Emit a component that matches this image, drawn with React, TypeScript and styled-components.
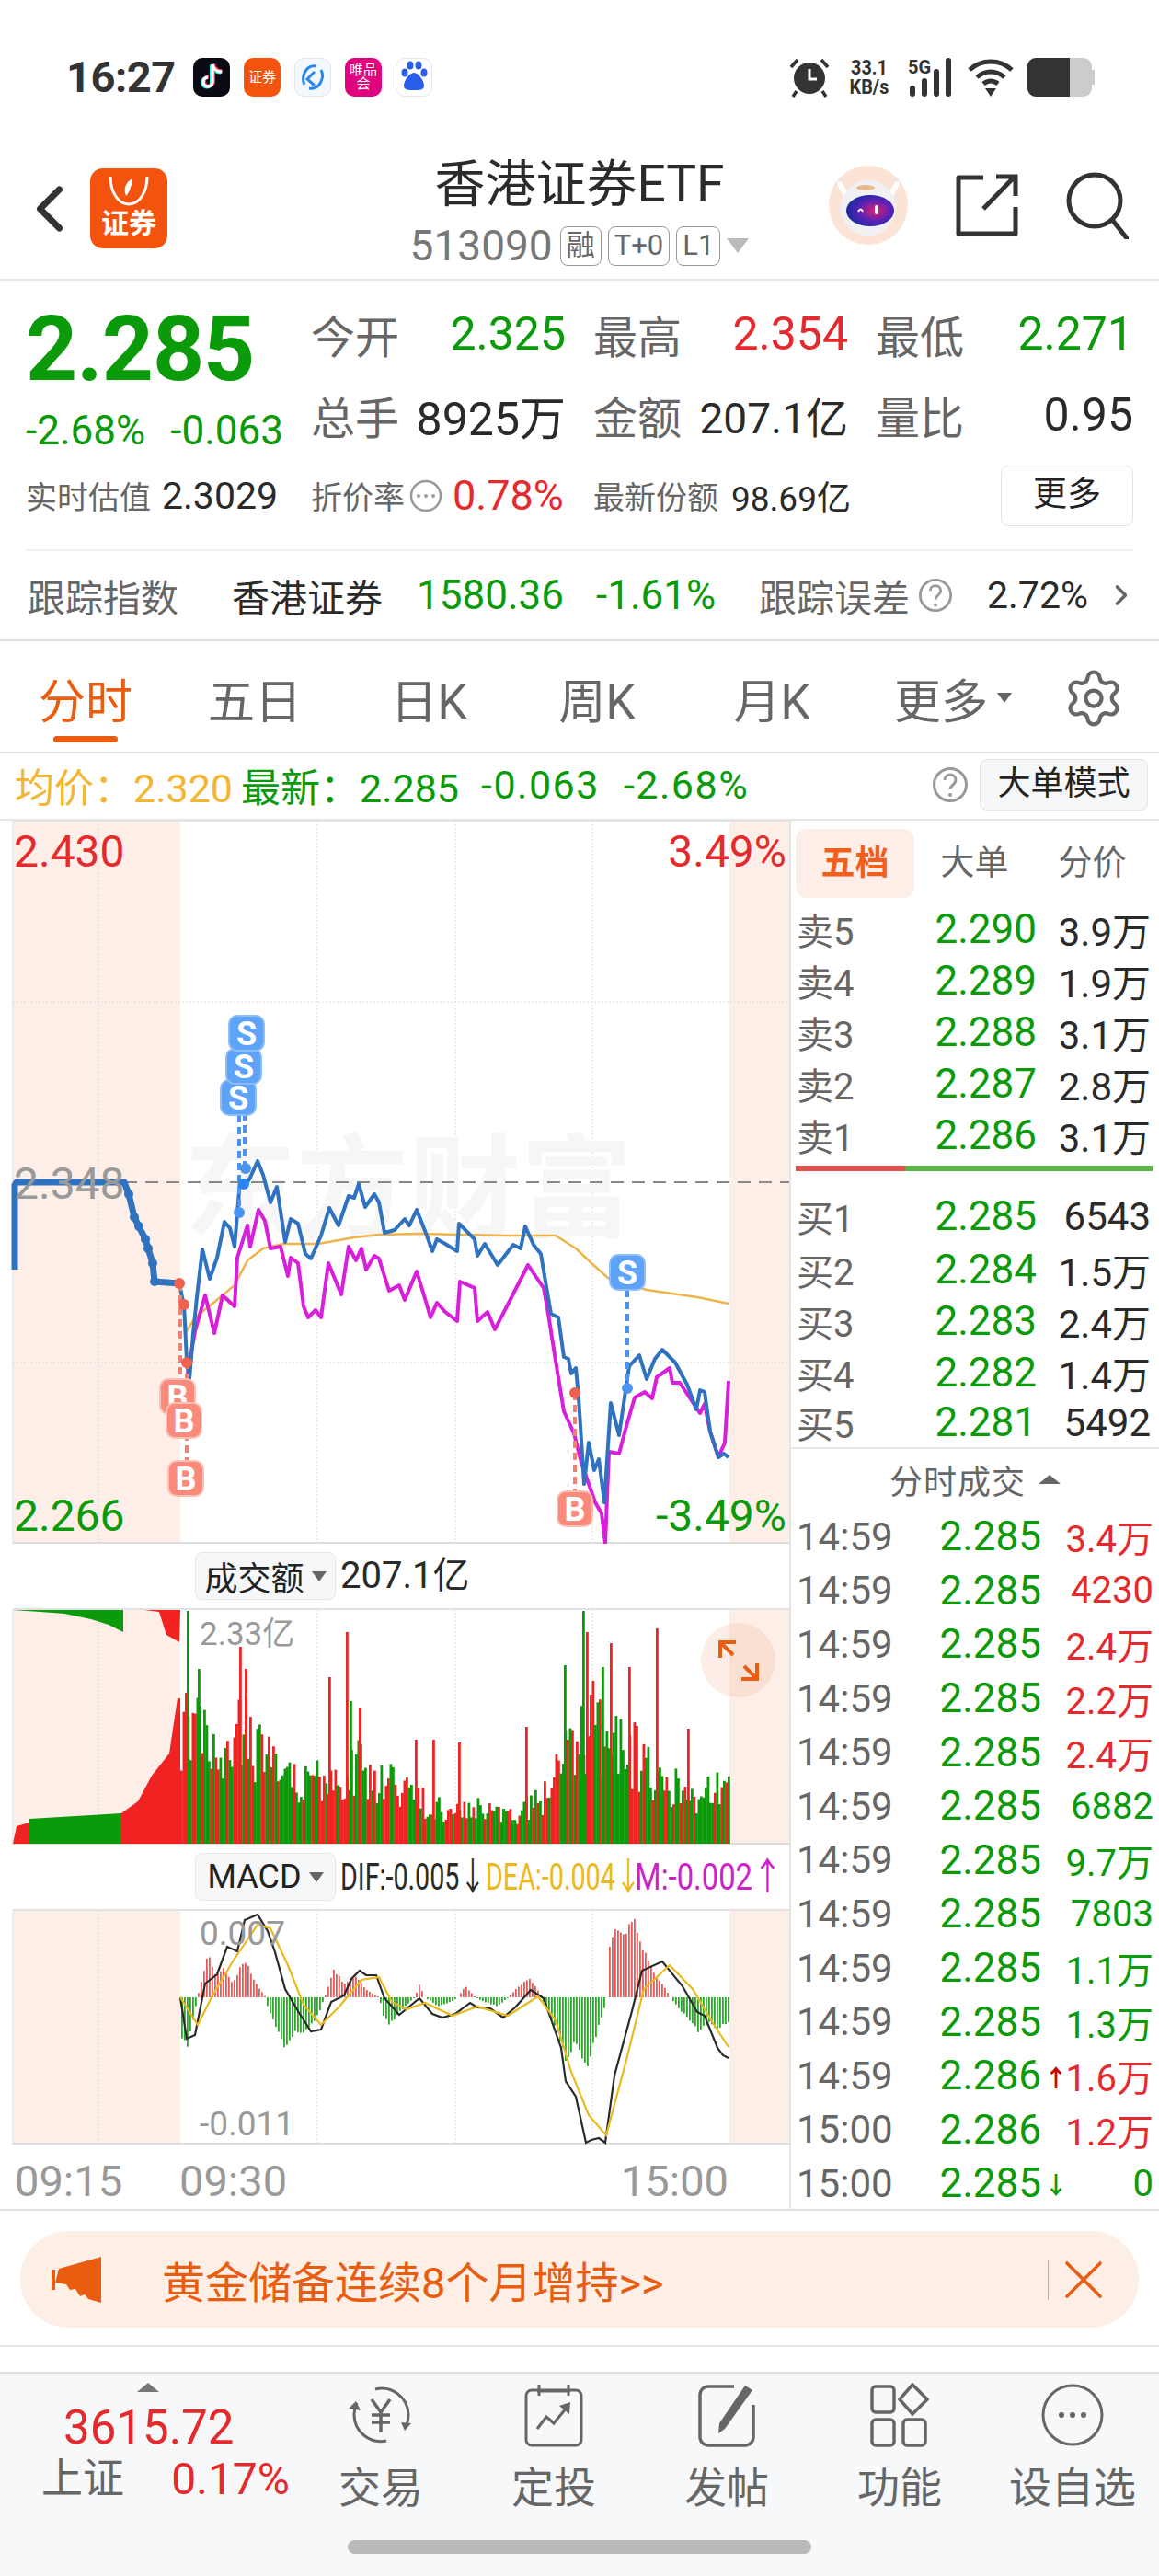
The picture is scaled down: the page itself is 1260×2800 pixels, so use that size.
import React from "react";
import styled, { createGlobalStyle } from "styled-components";
import { ChevronLeft, ChevronRight, Settings, X } from "lucide-react";

const FONT = `Roboto, "Noto Sans CJK SC", sans-serif`;
const GREEN = "#0a9a0a";
const RED = "#e42a2d";
const ORANGE = "#e85d10";

const GlobalStyle = createGlobalStyle`
  * { box-sizing: border-box; }
  html, body { margin: 0; padding: 0; background: #fff; }
  body { font-family: ${FONT}; color: #2a2a2a; width: 1260px; }
`;

type Pt = [number, number];

const line = (pts: Pt[]) => pts.map((p) => p.join(",")).join(" ");

const lerp = (pts: Pt[], x: number) => {
  for (let i = 1; i < pts.length; i++) {
    if (x <= pts[i][0]) {
      const [x0, y0] = pts[i - 1];
      const [x1, y1] = pts[i];
      return y0 + ((y1 - y0) * (x - x0)) / (x1 - x0);
    }
  }
  return pts[pts.length - 1][1];
};

const rng = (seed: number) => () => {
  seed = (seed * 16807) % 2147483647;
  return seed / 2147483647;
};

const PRE_LINE: Pt[] = [
  [16, 1380], [16, 1288], [18, 1285], [135, 1285], [140, 1298], [146, 1323], [151, 1333], [158, 1347],
  [161, 1357], [166, 1373], [168, 1393], [195, 1395],
];

const BLUE_LINE: Pt[] = [
  [195, 1395], [198, 1410], [200, 1418], [203, 1479], [206, 1499], [210, 1450], [214, 1410], [220, 1358], [228, 1390],
  [236, 1367], [244, 1328], [250, 1335], [255, 1355], [261, 1283], [266, 1290], [272, 1280], [280, 1262], [286, 1277],
  [294, 1307], [301, 1290], [310, 1350], [316, 1325], [324, 1330], [332, 1363], [338, 1368], [349, 1343], [358, 1313],
  [368, 1332], [379, 1300], [385, 1302], [390, 1287], [397, 1312], [407, 1298], [412, 1307], [418, 1340], [429, 1337],
  [440, 1325], [445, 1332], [453, 1315], [464, 1343], [470, 1360], [475, 1347], [484, 1352], [497, 1360], [499, 1330],
  [516, 1347], [519, 1365], [527, 1352], [541, 1375], [558, 1353], [566, 1357], [571, 1333], [580, 1353], [588, 1363],
  [593, 1393], [599, 1428], [607, 1432], [613, 1475], [618, 1477], [621, 1493], [626, 1487], [629, 1519], [635, 1613],
  [640, 1568], [646, 1598], [651, 1586], [657, 1633], [664, 1525], [673, 1560], [684, 1485], [695, 1473], [703, 1499],
  [712, 1477], [720, 1467], [734, 1481], [747, 1505], [757, 1532], [761, 1511], [766, 1513], [772, 1556], [781, 1584],
  [787, 1580], [792, 1584],
];

const PURPLE_LINE: Pt[] = [
  [203, 1499], [212, 1447], [223, 1408], [233, 1449], [242, 1408], [255, 1420], [258, 1367], [269, 1332], [272, 1355],
  [281, 1315], [288, 1327], [294, 1357], [305, 1355], [313, 1387], [316, 1367], [324, 1373], [330, 1420], [335, 1432],
  [343, 1424], [349, 1432], [357, 1373], [371, 1407], [379, 1355], [387, 1370], [393, 1357], [398, 1380], [407, 1365],
  [412, 1368], [423, 1403], [434, 1397], [440, 1413], [453, 1382], [464, 1418], [468, 1432], [475, 1416], [484, 1426],
  [497, 1436], [500, 1393], [516, 1400], [519, 1436], [530, 1426], [538, 1445], [552, 1418], [574, 1375], [591, 1400],
  [596, 1428], [604, 1479], [613, 1534], [624, 1558], [632, 1590], [647, 1633], [654, 1645], [658, 1677], [662, 1578],
  [673, 1580], [681, 1550], [690, 1519], [701, 1513], [709, 1520], [714, 1497], [728, 1487], [731, 1503], [739, 1503],
  [761, 1536], [766, 1526], [772, 1556], [781, 1584], [788, 1568], [792, 1501],
];

const AVG_LINE: Pt[] = [
  [196, 1395], [203, 1447], [212, 1432], [231, 1417], [255, 1397], [269, 1370], [286, 1357], [308, 1352], [346, 1352],
  [385, 1345], [412, 1342], [456, 1341], [549, 1343], [604, 1343], [626, 1357], [643, 1373], [662, 1390], [703, 1402],
  [758, 1410], [792, 1417],
];

const VOL_ENV: Pt[] = [
  [196, 180], [220, 170], [240, 110], [262, 170], [290, 120], [320, 100], [345, 90], [378, 120], [410, 100], [450, 70],
  [480, 50], [520, 50], [560, 40], [590, 70], [610, 120], [640, 180], [680, 150], [720, 90], [760, 70], [792, 90],
];

const VOL_PEAKS: { x: number; h: number; c: string }[] = [
  { x: 203, h: 253, c: GREEN }, { x: 215, h: 190, c: GREEN }, { x: 260, h: 214, c: "#f02222" },
  { x: 266, h: 190, c: "#f02222" }, { x: 357, h: 181, c: "#f02222" }, { x: 376, h: 230, c: "#f02222" },
  { x: 380, h: 155, c: GREEN }, { x: 390, h: 148, c: "#f02222" }, { x: 451, h: 113, c: "#f02222" },
  { x: 470, h: 113, c: "#f02222" }, { x: 498, h: 110, c: "#f02222" }, { x: 571, h: 127, c: "#f02222" },
  { x: 613, h: 194, c: GREEN }, { x: 633, h: 253, c: GREEN }, { x: 637, h: 230, c: "#f02222" },
  { x: 654, h: 192, c: GREEN }, { x: 663, h: 218, c: "#f02222" }, { x: 683, h: 192, c: "#f02222" },
  { x: 713, h: 234, c: "#f02222" }, { x: 747, h: 125, c: "#f02222" },
];

const VOL_BARS = (() => {
  const rand = rng(4711);
  const bars: { x: number; h: number; c: string }[] = [];
  for (let x = 196; x < 793; x += 2.5) {
    const h = lerp(VOL_ENV, x) * (0.42 + 0.58 * rand());
    bars.push({ x, h, c: rand() > 0.5 ? "#f02222" : GREEN });
  }
  return [...bars, ...VOL_PEAKS];
})();

const MACD_BLACK: Pt[] = [
  [196, 2172], [203, 2217], [212, 2213], [223, 2157], [236, 2147], [247, 2117], [258, 2122], [266, 2088], [280, 2082],
  [291, 2100], [299, 2123], [310, 2163], [324, 2187], [338, 2209], [349, 2207], [360, 2177], [374, 2170], [382, 2152],
  [391, 2143], [398, 2148], [409, 2148], [418, 2173], [434, 2191], [456, 2173], [470, 2190], [481, 2194], [495, 2190],
  [511, 2178], [519, 2183], [533, 2184], [547, 2194], [560, 2183], [577, 2164], [591, 2173], [610, 2227], [615, 2263],
  [626, 2280], [637, 2330], [643, 2327], [651, 2325], [658, 2330], [668, 2257], [687, 2187], [698, 2143], [720, 2133],
  [742, 2160], [758, 2188], [766, 2192], [780, 2227], [786, 2235], [792, 2238],
];

const MACD_YELLOW: Pt[] = [
  [196, 2172], [215, 2202], [231, 2170], [253, 2133], [280, 2093], [294, 2097], [313, 2137], [330, 2180], [349, 2202],
  [368, 2183], [393, 2153], [412, 2150], [426, 2177], [442, 2185], [462, 2178], [492, 2192], [519, 2182], [552, 2192],
  [585, 2171], [604, 2197], [621, 2253], [640, 2300], [659, 2322], [681, 2240], [700, 2163], [728, 2137], [753, 2163],
  [775, 2200], [792, 2226],
];

const MACD_HIST_ENV: Pt[] = [
  [196, -50], [203, -55], [212, -10], [216, 10], [225, 49], [234, 25], [242, 34], [252, 15], [265, 44], [278, 15],
  [288, 0], [290, -10], [300, -35], [310, -60], [320, -40], [330, -41], [345, -20], [352, 0], [362, 32], [374, 15],
  [385, 25], [398, 8], [412, 0], [415, -20], [423, -31], [435, -15], [445, -5], [450, 0], [455, 14], [461, 0],
  [475, -10], [490, -5], [497, 0], [505, 13], [516, 0], [525, -5], [540, -10], [552, 0], [560, 10], [574, 22],
  [586, 5], [592, -10], [605, -40], [615, -75], [625, -50], [636, -83], [645, -50], [654, -20], [659, 0], [662, 60],
  [668, 79], [678, 72], [687, 94], [697, 60], [709, 29], [720, 15], [728, 0], [735, -10], [758, -38], [770, -30],
  [780, -35], [792, -28],
];

const MACD_BARS = (() => {
  const rand = rng(99);
  const bars: { x: number; v: number }[] = [];
  for (let x = 197; x < 793; x += 3) {
    bars.push({ x, v: lerp(MACD_HIST_ENV, x) * (0.88 + 0.12 * rand()) });
  }
  return bars;
})();

const GRID_X = [107, 345, 495, 644];

const SELLS = [
  ["卖5", "2.290", "3.9万"], ["卖4", "2.289", "1.9万"], ["卖3", "2.288", "3.1万"], ["卖2", "2.287", "2.8万"], ["卖1", "2.286", "3.1万"],
];
const BUYS = [
  ["买1", "2.285", "6543"], ["买2", "2.284", "1.5万"], ["买3", "2.283", "2.4万"], ["买4", "2.282", "1.4万"], ["买5", "2.281", "5492"],
];
const TRADES: { t: string; p: string; v: string; c: string; a?: string; ac?: string }[] = [
  { t: "14:59", p: "2.285", v: "3.4万", c: RED },
  { t: "14:59", p: "2.285", v: "4230", c: RED },
  { t: "14:59", p: "2.285", v: "2.4万", c: RED },
  { t: "14:59", p: "2.285", v: "2.2万", c: RED },
  { t: "14:59", p: "2.285", v: "2.4万", c: RED },
  { t: "14:59", p: "2.285", v: "6882", c: GREEN },
  { t: "14:59", p: "2.285", v: "9.7万", c: GREEN },
  { t: "14:59", p: "2.285", v: "7803", c: GREEN },
  { t: "14:59", p: "2.285", v: "1.1万", c: GREEN },
  { t: "14:59", p: "2.285", v: "1.3万", c: GREEN },
  { t: "14:59", p: "2.286", v: "1.6万", c: RED, a: "↑", ac: "#c00" },
  { t: "15:00", p: "2.286", v: "1.2万", c: RED },
  { t: "15:00", p: "2.285", v: "0", c: GREEN, a: "↓", ac: GREEN },
];

const Page = styled.div`
  width: 1260px;
  height: 2800px;
  overflow: hidden;
  background: #fff;
  display: flex;
  flex-direction: column;
`;

const StatusBar = styled.div`
  height: 140px;
  padding: 63px 70px 0 72px;
  display: flex;
  align-items: flex-start;
  justify-content: space-between;
`;

const StatusGroup = styled.div<{ $gap: number }>`
  display: flex;
  align-items: center;
  height: 42px;
  gap: ${(p) => p.$gap}px;
`;

const Clock = styled.span`
  font-size: 47px;
  font-weight: 700;
  color: #333;
  width: 123px;
  letter-spacing: -0.5px;
  line-height: 42px;
  white-space: nowrap;
`;

const AppIcon = styled.div<{ $bg: string; $border?: boolean }>`
  width: 40px;
  height: 42px;
  border-radius: 10px;
  background: ${(p) => p.$bg};
  border: ${(p) => (p.$border ? "1px solid #e6e6e6" : "none")};
  display: flex;
  align-items: center;
  justify-content: center;
  overflow: hidden;
`;

const AppIconText = styled.span`
  color: #fff;
  font-size: 15px;
  line-height: 15px;
  width: 32px;
  text-align: center;
  word-break: break-all;
`;

const SpeedText = styled.div`
  font-size: 22px;
  font-weight: 700;
  line-height: 21px;
  color: #333;
  text-align: center;
  width: 56px;
  transform: scaleX(0.9);
`;

const SignalBox = styled.div`
  position: relative;
  width: 50px;
  height: 42px;
`;

const SignalSvg = styled.svg`
  position: absolute;
  left: 0;
  top: 0;
`;

const FiveG = styled.span`
  position: absolute;
  left: 0;
  top: -2px;
  font-size: 20px;
  font-weight: 700;
  color: #333;
`;

const Header = styled.header`
  height: 165px;
  display: grid;
  grid-template-columns: 360px 540px 360px;
  border-bottom: 2px solid #e4e6e6;
`;

const HeaderLeft = styled.div`
  display: flex;
  align-items: center;
  padding: 0 0 0 12px;
  gap: 2px;
  height: 165px;
  margin-top: 4px;
`;

const LogoTile = styled.div`
  width: 84px;
  height: 87px;
  border-radius: 14px;
  background: #f4530e;
  color: #fff;
  font-size: 30px;
  font-weight: 700;
  display: flex;
  flex-direction: column;
  align-items: center;
  justify-content: flex-end;
  padding-bottom: 10px;
  line-height: 34px;
`;

const HeaderCenter = styled.div`
  display: flex;
  flex-direction: column;
  align-items: center;
  padding-top: 25px;
`;

const Title = styled.div`
  font-size: 55px;
  line-height: 70px;
  color: #2b2b2b;
  white-space: nowrap;
`;

const CodeRow = styled.div`
  display: flex;
  align-items: center;
  height: 44px;
  margin-top: 10px;
  gap: 7px;
`;

const Code = styled.span`
  font-size: 46px;
  color: #777;
  margin-right: 1px;
`;

const Badge = styled.span`
  height: 43px;
  padding: 0 6px;
  border: 1.5px solid #999;
  border-radius: 8px;
  font-size: 31px;
  line-height: 39px;
  color: #666;
`;

const TinyDown = styled.span<{ $size: number; $color: string }>`
  width: 0;
  height: 0;
  border-left: ${(p) => p.$size}px solid transparent;
  border-right: ${(p) => p.$size}px solid transparent;
  border-top: ${(p) => p.$size * 1.4}px solid ${(p) => p.$color};
`;

const HeaderRight = styled.div`
  display: flex;
  align-items: center;
  justify-content: flex-end;
  padding-right: 33px;
  gap: 52px;
  height: 165px;

  & > svg {
    flex-shrink: 0;
  }
`;

const Stats = styled.section`
  margin: 0 28px;
  padding: 14px 0 13px;
  height: 294px;
  display: grid;
  grid-template-columns: 280px 277px 277px 280px;
  grid-template-rows: 88px 88px 87px;
  column-gap: 30px;
  row-gap: 0;
  align-items: center;
  border-bottom: 2px solid #f1f1f1;
`;

const PriceBlock = styled.div`
  grid-column: 1;
  grid-row: 1 / 3;
  align-self: stretch;
  width: 300px;
  padding-top: 3px;
`;

const BigPrice = styled.div`
  font-size: 98px;
  font-weight: 700;
  color: ${GREEN};
  line-height: 116px;
  height: 116px;
  letter-spacing: -1px;
`;

const Changes = styled.div`
  display: flex;
  justify-content: space-between;
  font-size: 44px;
  line-height: 60px;
  color: ${GREEN};
  width: 280px;
`;

const StatCell = styled.div`
  display: flex;
  align-items: center;
  justify-content: space-between;
`;

const StatCellStart = styled(StatCell)`
  grid-column: 2;
`;

const StatLabel = styled.span`
  font-size: 48px;
  color: #666;
`;

const StatValue = styled.span<{ $color?: string; $size?: number }>`
  font-size: ${(p) => p.$size ?? 50}px;
  color: ${(p) => p.$color ?? "#2a2a2a"};
`;

const SubCell = styled.div`
  display: flex;
  align-items: center;
  white-space: nowrap;
  width: 100%;
`;

const SubLabel = styled.span`
  font-size: 34px;
  color: #666;
`;

const SubValue = styled.span<{ $size: number; $color?: string; $ml: number }>`
  font-size: ${(p) => p.$size}px;
  margin-left: ${(p) => p.$ml}px;
  color: ${(p) => p.$color ?? "#2a2a2a"};
`;

const DotsWrap = styled.span`
  display: inline-flex;
  margin-left: 5px;
`;

const MoreBtn = styled.div`
  justify-self: end;
  width: 144px;
  height: 66px;
  border: 1.5px solid #e4e4e4;
  border-radius: 8px;
  font-size: 37px;
  line-height: 62px;
  text-align: center;
  color: #222;
`;

const TrackRow = styled.section`
  height: 98px;
  padding-left: 30px;
  display: grid;
  grid-template-columns: 222px 201px 195px 177px 173px 75px 128px 30px;
  align-items: center;
  border-bottom: 2px solid #dfe1e1;
  font-size: 41px;
  white-space: nowrap;
`;

const Muted = styled.span`
  color: #666;
`;

const Dark = styled.span`
  color: #2a2a2a;
`;

const GreenNum = styled.span`
  color: ${GREEN};
  font-size: 44px;
`;

const TabsBar = styled.nav`
  height: 122px;
  display: grid;
  grid-template-columns: 186px 182px 196px 170px 210px 184px 122px;
  align-items: center;
  border-bottom: 2px solid #dfe1e1;
`;

const Tab = styled.div<{ $active?: boolean }>`
  position: relative;
  font-size: 51px;
  height: 120px;
  padding-top: 3px;
  text-align: center;
  color: ${(p) => (p.$active ? ORANGE : "#666")};
  display: flex;
  align-items: center;
  justify-content: center;
  gap: 10px;

  &::after {
    content: "";
    display: ${(p) => (p.$active ? "block" : "none")};
    position: absolute;
    left: 58px;
    width: 70px;
    bottom: 10px;
    height: 7px;
    border-radius: 4px;
    background: ${ORANGE};
  }
`;

const InfoBar = styled.section`
  height: 73px;
  display: flex;
  align-items: center;
  padding: 0 12px 3px 16px;
  font-size: 43px;
  border-bottom: 2px solid #e4e6e6;
  white-space: nowrap;
`;

const InfoPart = styled.span<{ $color: string; $ml?: number; $wide?: boolean }>`
  color: ${(p) => p.$color};
  margin-left: ${(p) => p.$ml ?? 0}px;
  letter-spacing: ${(p) => (p.$wide ? "1.5px" : "0")};
`;

const ModeBtn = styled.div`
  margin-left: 12px;
  width: 183px;
  height: 56px;
  background: #f6f7f8;
  border: 1.5px solid #e4e4e4;
  border-radius: 8px;
  font-size: 36px;
  line-height: 52px;
  text-align: center;
  color: #222;
`;

const Spacer = styled.div`
  flex: 1;
`;

const Board = styled.section`
  height: 1511px;
  display: grid;
  grid-template-columns: 858px 402px;
  border-bottom: 2px solid #dfe1e1;
`;

const ChartColumn = styled.div`
  display: flex;
  flex-direction: column;
`;

const PlotWrap = styled.div<{ $h: number }>`
  position: relative;
  height: ${(p) => p.$h}px;
`;

const PlotSvg = styled.svg`
  display: block;
  width: 100%;
  height: 100%;
`;

const PlotLabel = styled.span<{ $color: string; $size: number; $left?: number; $right?: number; $top: number }>`
  position: absolute;
  top: ${(p) => p.$top}px;
  left: ${(p) => (p.$left !== undefined ? `${p.$left}px` : "auto")};
  right: ${(p) => (p.$right !== undefined ? `${p.$right}px` : "auto")};
  color: ${(p) => p.$color};
  font-size: ${(p) => p.$size}px;
  line-height: ${(p) => p.$size + 4}px;
  white-space: nowrap;
`;

const SubHead = styled.div`
  height: 70px;
  padding: 9px 0 0 212px;
  display: flex;
  align-items: flex-start;
`;

const Select = styled.div`
  width: 153px;
  height: 52px;
  background: #f6f7f8;
  border: 1.5px solid #e6e6e6;
  border-radius: 8px;
  display: flex;
  align-items: center;
  justify-content: center;
  gap: 8px;
  font-size: 36px;
  color: #222;
`;

const SubHeadValue = styled.span`
  font-size: 40px;
  line-height: 52px;
  margin-left: 5px;
  color: #2a2a2a;
`;

const LegendRow = styled.div`
  display: flex;
  margin-left: 5px;
`;

const Legend = styled.span<{ $color: string; $w: number; $sx: number }>`
  display: inline-block;
  width: ${(p) => p.$w}px;
  color: ${(p) => p.$color};
  font-size: 41px;
  line-height: 52px;
  white-space: nowrap;
  transform: scaleX(${(p) => p.$sx});
  transform-origin: left center;
`;

const Expand = styled.div`
  position: absolute;
  left: 762px;
  top: 16px;
  width: 81px;
  height: 81px;
  border-radius: 50%;
  background: rgba(238, 150, 105, 0.16);
  display: flex;
  align-items: center;
  justify-content: center;
`;

const TimeAxis = styled.div`
  height: 71px;
  padding: 5px 66px 0 16px;
  display: grid;
  grid-template-columns: 179px 1fr auto;
  align-items: center;
  font-size: 47px;
  color: #999;
`;

const Side = styled.aside`
  border-left: 2px solid #e4e6e6;
  display: flex;
  flex-direction: column;
`;

const SideTabs = styled.div`
  height: 87px;
  padding: 9px 0 3px 5px;
  display: grid;
  grid-template-columns: 129px 131px 125px;
  align-items: center;
`;

const SideTab = styled.div<{ $active?: boolean }>`
  height: 75px;
  border-radius: 12px;
  background: ${(p) => (p.$active ? "#fdeee8" : "transparent")};
  color: ${(p) => (p.$active ? "#f0601c" : "#666")};
  font-size: 37px;
  font-weight: ${(p) => (p.$active ? 700 : 400)};
  line-height: 75px;
  text-align: center;
`;

const BookRow = styled.div`
  height: 56px;
  padding: 0 6px 0 6px;
  display: grid;
  grid-template-columns: 90px 171px 124px;
  align-items: center;
  white-space: nowrap;
`;

const BookLabel = styled.span`
  font-size: 40px;
  color: #666;
`;

const BookPrice = styled.span`
  font-size: 44px;
  text-align: right;
  color: ${GREEN};
`;

const BookVol = styled.span`
  font-size: 42px;
  text-align: right;
  color: #2a2a2a;
`;

const Ratio = styled.div`
  height: 34px;
  padding: 8px 7px 0 5px;
`;

const RatioBar = styled.div`
  height: 6px;
  background: linear-gradient(100deg, #e25050 30.5%, #5cb54a 31%);
`;

const BuySide = styled.div`
  border-bottom: 2px solid #e6e6e6;
`;

const TradeHead = styled.div`
  height: 66px;
  display: flex;
  align-items: center;
  justify-content: center;
  gap: 14px;
  font-size: 36px;
  color: #666;
  letter-spacing: 1px;
`;

const TinyUp = styled.span`
  width: 0;
  height: 0;
  border-left: 12px solid transparent;
  border-right: 12px solid transparent;
  border-bottom: 10px solid #666;
`;

const TradeRow = styled.div`
  height: 58.6px;
  padding: 0 6px;
  display: grid;
  grid-template-columns: 100px 166px 122px;
  align-items: center;
  white-space: nowrap;
`;

const TradeTime = styled.span`
  font-size: 42px;
  color: #666;
`;

const TradeVol = styled.span<{ $color: string }>`
  display: flex;
  justify-content: space-between;
  align-items: center;
  font-size: 40px;
  color: ${(p) => p.$color};
`;

const Flash = styled.span<{ $color: string }>`
  color: ${(p) => p.$color};
  font-weight: 700;
  font-size: 26px;
  width: 20px;
  margin-left: 3px;
`;

const BannerWrap = styled.section`
  height: 148px;
  padding: 22px 22px 0;
  border-bottom: 2px solid #e4e6e6;
`;

const Banner = styled.div`
  height: 105px;
  border-radius: 52px;
  background: #fdeee6;
  display: flex;
  align-items: center;
  padding: 0 24px 0 34px;
  color: ${ORANGE};
`;

const BannerText = styled.span`
  font-size: 47px;
  margin-left: 64px;
  flex: 1;
  white-space: nowrap;
`;

const BannerSep = styled.span`
  width: 1.5px;
  height: 44px;
  background: #e9a27e;
  margin-right: 2px;
`;

const Gap = styled.div`
  height: 27px;
`;

const BottomNav = styled.nav`
  position: relative;
  flex: 1;
  background: #f7f8fa;
  border-top: 2px solid #dcdee0;
  display: grid;
  grid-template-columns: 320px repeat(5, 188px);
  align-content: start;
`;

const IndexCell = styled.div`
  position: relative;
  padding: 33px 0 0 45px;
`;

const IndexArrow = styled.span`
  position: absolute;
  left: 149px;
  top: 10px;
  width: 0;
  height: 0;
  border-left: 12px solid transparent;
  border-right: 12px solid transparent;
  border-bottom: 10px solid #777;
`;

const IndexValue = styled.div`
  font-size: 51px;
  line-height: 52px;
  color: ${RED};
  padding-left: 24px;
  white-space: nowrap;
`;

const IndexRow = styled.div`
  display: flex;
  justify-content: space-between;
  width: 270px;
  margin-top: 5px;
  font-size: 45px;
  line-height: 50px;
  color: #666;
`;

const IndexPct = styled.span`
  color: ${RED};
  font-size: 48px;
`;

const NavItem = styled.div`
  display: flex;
  flex-direction: column;
  align-items: center;
  padding-top: 10px;
  font-size: 46px;
  color: #666;
  line-height: 52px;
  gap: 18px;
  white-space: nowrap;
`;

const HomeBar = styled.div`
  position: absolute;
  left: 378px;
  bottom: 24px;
  width: 504px;
  height: 15px;
  border-radius: 8px;
  background: #b8b9bb;
`;

const Tag = ({ x, y, kind }: { x: number; y: number; kind: "S" | "B" }) => (
  <g>
    <rect
      x={x - 19}
      y={y - 19}
      width={38}
      height={38}
      rx={9}
      fill={kind === "S" ? "#5ea3f7" : "#fa8b7c"}
      stroke={kind === "S" ? "#8cbdf9" : "#fcc0b6"}
      strokeWidth={2}
    />
    <text x={x} y={y + 13} textAnchor="middle" fontSize={36} fontWeight={700} fill="#fff" fontFamily="Roboto, sans-serif">
      {kind}
    </text>
  </g>
);

const PlotGrid = ({ top, bottom }: { top: number; bottom: number }) => (
  <>
    <rect x={14} y={top} width={182} height={bottom - top} fill="#fdeee8" />
    <rect x={793} y={top} width={65} height={bottom - top} fill="#fdeee8" />
    <line x1={14} y1={top} x2={14} y2={bottom} stroke="#ddd" strokeWidth={1} />
    {GRID_X.map((x) => (
      <line key={x} x1={x} y1={top} x2={x} y2={bottom} stroke="#d9d9d9" strokeWidth={1} strokeDasharray="2 2" />
    ))}
    <line x1={14} y1={top} x2={858} y2={top} stroke="#e2e2e2" strokeWidth={2} />
    <line x1={14} y1={bottom - 1} x2={858} y2={bottom - 1} stroke="#ddd" strokeWidth={2} />
  </>
);

const MainPlot = () => (
  <PlotSvg viewBox="0 892 858 786">
    <PlotGrid top={892} bottom={1678} />
    {[1089, 1481].map((y) => (
      <line key={y} x1={14} y1={y} x2={858} y2={y} stroke="#dcdcdc" strokeWidth={1} strokeDasharray="2 2" />
    ))}
    <text x={200} y={1335} fontSize={122} fill="#f6f6f6" fontFamily={`"Noto Sans CJK SC", sans-serif`} fontWeight={700}>
      东方财富
    </text>
    <line x1={135} y1={1285} x2={858} y2={1285} stroke="#888" strokeWidth={2} strokeDasharray="14 9" />
    <polyline points={line(AVG_LINE)} fill="none" stroke="#efb34c" strokeWidth={2.5} />
    <polyline points={line(PURPLE_LINE)} fill="none" stroke="#d81fdc" strokeWidth={4} strokeLinejoin="round" />
    <polyline points={line(BLUE_LINE)} fill="none" stroke="#2f72bf" strokeWidth={4} strokeLinejoin="round" />
    <polyline points={line(PRE_LINE)} fill="none" stroke="#2f72bf" strokeWidth={7} strokeLinejoin="round" />
    {PRE_LINE.slice(4).map(([x, y]) => (
      <circle key={x} cx={x} cy={y} r={5} fill="#2f72bf" />
    ))}
    <line x1={266} y1={1210} x2={266} y2={1275} stroke="#4a94f0" strokeWidth={4} strokeDasharray="8 5" />
    <line x1={260} y1={1212} x2={260} y2={1318} stroke="#4a94f0" strokeWidth={4} strokeDasharray="8 5" />
    <line x1={682} y1={1402} x2={682} y2={1509} stroke="#4a94f0" strokeWidth={4} strokeDasharray="8 5" />
    <line x1={196} y1={1395} x2={196} y2={1500} stroke="#f0806f" strokeWidth={4} strokeDasharray="8 5" />
    <line x1={203} y1={1480} x2={203} y2={1590} stroke="#f0806f" strokeWidth={4} strokeDasharray="8 5" />
    <line x1={625} y1={1514} x2={625} y2={1622} stroke="#f0806f" strokeWidth={4} strokeDasharray="8 5" />
    <circle cx={267} cy={1270} r={6} fill="#4a94f0" />
    <circle cx={265} cy={1287} r={6} fill="#2a84f5" />
    <circle cx={260} cy={1318} r={6} fill="#4a94f0" />
    <circle cx={682} cy={1509} r={6} fill="#4a94f0" />
    <circle cx={195} cy={1395} r={6} fill="#f0604f" />
    <circle cx={200} cy={1418} r={6} fill="#f0604f" />
    <circle cx={203} cy={1481} r={6} fill="#f0604f" />
    <circle cx={625} cy={1514} r={6} fill="#f0604f" />
    <Tag kind="S" x={259} y={1193} />
    <Tag kind="S" x={265} y={1159} />
    <Tag kind="S" x={268} y={1123} />
    <Tag kind="S" x={682} y={1383} />
    <Tag kind="B" x={193} y={1518} />
    <Tag kind="B" x={200} y={1544} />
    <Tag kind="B" x={202} y={1607} />
    <Tag kind="B" x={625} y={1640} />
  </PlotSvg>
);

const VolumePlot = () => (
  <PlotSvg viewBox="0 1748 858 257">
    <PlotGrid top={1749} bottom={2005} />
    <polygon fill={GREEN} points="14,1750 44,1752 70,1754 99,1760 118,1766 134,1774 134,1750" />
    <polygon fill="#f02222" points="157,1750 173,1752 181,1777 195,1785 196,1750" />
    <polygon fill={GREEN} points="32,2004 32,1977 132,1971 132,2004" />
    <polygon fill="#f02222" points="14,2004 18,1985 32,1981 32,2004" />
    <polygon fill="#f02222" points="132,2004 132,1971 150,1958 165,1930 184,1906 190,1866 193,1846 196,1846 196,2004" />
    {VOL_BARS.map((b, i) => (
      <rect key={i} x={b.x} y={2004 - b.h} width={2.8} height={b.h} fill={b.c} />
    ))}
  </PlotSvg>
);

const MacdPlot = () => (
  <PlotSvg viewBox="0 2076 858 257">
    <PlotGrid top={2077} bottom={2332} />
    {MACD_BARS.map((b) => (
      <rect
        key={b.x}
        x={b.x}
        y={b.v > 0 ? 2172 - b.v : 2172}
        width={1.8}
        height={Math.abs(b.v)}
        fill={b.v > 0 ? "#e85a5a" : "#2aa82a"}
      />
    ))}
    <polyline points={line(MACD_BLACK)} fill="none" stroke="#2a2a2a" strokeWidth={2.2} />
    <polyline points={line(MACD_YELLOW)} fill="none" stroke="#eab91e" strokeWidth={2.2} />
  </PlotSvg>
);

const AlarmIcon = () => (
  <svg width="46" height="44" viewBox="0 0 46 44">
    <circle cx="23" cy="23" r="17" fill="#333" />
    <path d="M23 13v11h8" stroke="#fff" strokeWidth="3" fill="none" />
    <path d="M3 11 10 3M43 11 36 3M9 37l-4 6M37 37l4 6" stroke="#333" strokeWidth="3.5" />
  </svg>
);

const SignalIcon = () => (
  <SignalSvg width="50" height="42" viewBox="0 0 50 42">
    {[[2, 30, 12], [15, 22, 20], [28, 12, 30], [41, 0, 42]].map(([x, y, h]) => (
      <rect key={x} x={x} y={y} width={6} height={h} rx={3} fill="#333" />
    ))}
  </SignalSvg>
);

const WifiIcon = () => (
  <svg width="52" height="42" viewBox="0 0 52 42">
    <path d="M3 13C16 1 36 1 49 13M11 21c9-8 21-8 30 0M18 28c5-4 11-4 16 0" fill="none" stroke="#333" strokeWidth="5" />
    <path d="M26 42 20 33h12z" fill="#333" />
  </svg>
);

const BatteryIcon = () => (
  <svg width="73" height="42" viewBox="0 0 73 42">
    <rect x="0" y="0" width="70" height="42" rx="9" fill="#ccc" />
    <path d="M9 0h37v42H9a9 9 0 0 1-9-9V9a9 9 0 0 1 9-9z" fill="#333" />
    <rect x="70" y="13" width="3" height="16" rx="1" fill="#ccc" />
  </svg>
);

const BaiduIcon = () => (
  <svg width="30" height="36" viewBox="0 0 30 36">
    <g fill="#2a5ee8">
      <ellipse cx="5" cy="13" rx="3.5" ry="4.5" />
      <ellipse cx="11" cy="5" rx="3.5" ry="4.5" />
      <ellipse cx="20" cy="5" rx="3.5" ry="4.5" />
      <ellipse cx="26" cy="13" rx="3.5" ry="4.5" />
      <path d="M15 13c5 0 11 9 11 14 0 5-5 5-11 5S4 32 4 27c0-5 6-14 11-14z" />
    </g>
  </svg>
);

const RingAppIcon = () => (
  <svg width="32" height="36" viewBox="0 0 32 36">
    <path d="M20 6C8 4 3 18 7 26M12 30c12 2 17-12 13-20" fill="none" stroke="#2c87e8" strokeWidth="3" />
    <path d="M18 12 10 20l8 7" fill="none" stroke="#2c87e8" strokeWidth="3" />
  </svg>
);

const NoteIcon = () => (
  <svg width="28" height="32" viewBox="0 0 28 32">
    <path d="M15 2v19a5 5 0 1 1-5-5M15 2c1 5 5 8 10 8" fill="none" stroke="#25f4ee" strokeWidth="4" transform="translate(-1 0.6)" />
    <path d="M15 2v19a5 5 0 1 1-5-5M15 2c1 5 5 8 10 8" fill="none" stroke="#fe2c55" strokeWidth="4" transform="translate(1 -0.6)" />
    <path d="M15 2v19a5 5 0 1 1-5-5M15 2c1 5 5 8 10 8" fill="none" stroke="#fff" strokeWidth="3.4" />
  </svg>
);

const LogoMark = () => (
  <svg width="50" height="34" viewBox="0 0 50 34">
    <path d="M5 0c0 16 8 30 20 30S45 16 45 0" fill="none" stroke="#fff" strokeWidth="3" />
    <path d="M29 2c-8 4-10 12-7 19 2-2 6-8 7-19z" fill="#fff" />
  </svg>
);

const RobotAvatar = () => (
  <svg width="86" height="90" viewBox="0 0 86 90">
    <defs>
      <radialGradient id="visor" cx="60%" cy="50%" r="60%">
        <stop offset="0" stopColor="#e0206a" />
        <stop offset="0.55" stopColor="#5a22b8" />
        <stop offset="1" stopColor="#1a2a9a" />
      </radialGradient>
    </defs>
    <circle cx="43" cy="45" r="43" fill="#fbe3d6" />
    <path d="M12 22 20 36M74 22 66 36" stroke="#fff" strokeWidth="6" strokeLinecap="round" />
    <ellipse cx="43" cy="48" rx="30" ry="30" fill="#f1f0f2" />
    <ellipse cx="40" cy="26" rx="10" ry="3" fill="#e8b98e" />
    <ellipse cx="45" cy="51" rx="26" ry="17" fill="url(#visor)" />
    <path d="M32 52q3-5 5 0" stroke="#fff" strokeWidth="2" fill="none" />
    <rect x="50" y="45" width="4" height="10" rx="2" fill="#fff" />
  </svg>
);

const ShareIcon = () => (
  <svg width="68" height="68" viewBox="0 0 68 68">
    <path d="M30 4H3v61h62V36" fill="none" stroke="#333" strokeWidth="5" strokeLinejoin="round" />
    <path d="M30 38 64 3M44 3h21v21" fill="none" stroke="#333" strokeWidth="5" />
  </svg>
);

const SearchIcon = () => (
  <svg width="68" height="74" viewBox="0 0 68 74">
    <circle cx="31" cy="32" r="28" fill="none" stroke="#333" strokeWidth="5" />
    <path d="M51 54 66 73" fill="none" stroke="#333" strokeWidth="5" strokeLinecap="round" />
  </svg>
);

const QuestionDot = ({ size }: { size: number }) => (
  <svg width={size} height={size} viewBox="0 0 40 40">
    <circle cx="20" cy="20" r="17.5" fill="none" stroke="#999" strokeWidth="3" />
    <path d="M14 15c0-8 12-8 12 0 0 5-6 5-6 10" fill="none" stroke="#999" strokeWidth="3" />
    <circle cx="20" cy="31" r="2" fill="#999" />
  </svg>
);

const DotsIcon = () => (
  <DotsWrap>
    <svg width="36" height="36" viewBox="0 0 36 36">
      <circle cx="18" cy="18" r="16" fill="none" stroke="#999" strokeWidth="2.5" />
      <circle cx="10" cy="18" r="2" fill="#999" />
      <circle cx="18" cy="18" r="2" fill="#999" />
      <circle cx="26" cy="18" r="2" fill="#999" />
    </svg>
  </DotsWrap>
);

const HornIcon = () => (
  <svg width="56" height="50" viewBox="0 0 56 50">
    <rect x="0" y="14" width="4" height="22" fill={ORANGE} />
    <path d="M8 13 54 0v50l-14-4-4-5-5 2-5-8-6 1-4-6-12-2z" fill={ORANGE} />
  </svg>
);

const ExpandIcon = () => (
  <svg width="46" height="46" viewBox="0 0 46 46">
    <path d="M3 20V3h17M3 3l14 14M43 26v17H26M43 43 29 29" fill="none" stroke={ORANGE} strokeWidth="4" />
  </svg>
);

const TradeNavIcon = () => (
  <svg width="76" height="70" viewBox="0 0 76 70">
    <path d="M32 7a29 29 0 0 1 36 27c0 6-1 11-4 15M44 63A29 29 0 0 1 9 35c0-5 1-9 3-13" fill="none" stroke="#666" strokeWidth="3" />
    <path d="M3 28 11 20l5 10M60 43l4 9 7-8" fill="#666" stroke="none" />
    <path d="M28 18 38 32 48 18M38 32V54M28 35H48M28 43H48" fill="none" stroke="#666" strokeWidth="3.5" />
  </svg>
);

const PlanNavIcon = () => (
  <svg width="64" height="70" viewBox="0 0 64 70">
    <rect x="2" y="8" width="60" height="60" rx="6" fill="none" stroke="#666" strokeWidth="3" />
    <path d="M16 2v12M48 2v12M14 9h36" stroke="#666" strokeWidth="3" fill="#f7f8fa" />
    <path d="M14 50 24 37l8 7 14-17" fill="none" stroke="#666" strokeWidth="3" />
    <path d="M38 25 50 21l-1 13z" fill="#666" />
  </svg>
);

const PostNavIcon = () => (
  <svg width="64" height="70" viewBox="0 0 64 70">
    <path d="M40 4H12a9 9 0 0 0-9 9v46a9 9 0 0 0 9 9h40a9 9 0 0 0 9-9V24" fill="none" stroke="#666" strokeWidth="3.5" />
    <path d="M24 44 52 3l8 5-30 42-7 5z" fill="#666" />
  </svg>
);

const ToolsNavIcon = () => (
  <svg width="64" height="70" viewBox="0 0 64 70">
    <g fill="none" stroke="#666" strokeWidth="3.5">
      <rect x="2" y="4" width="24" height="28" rx="4" />
      <path d="M46 2 62 18 46 34 32 18z" />
      <rect x="2" y="40" width="24" height="28" rx="4" />
      <rect x="36" y="40" width="24" height="28" rx="4" />
    </g>
  </svg>
);

const MoreNavIcon = () => (
  <svg width="68" height="70" viewBox="0 0 68 70">
    <ellipse cx="34" cy="35" rx="32" ry="32" fill="none" stroke="#666" strokeWidth="3" />
    <circle cx="22" cy="35" r="3" fill="#666" />
    <circle cx="34" cy="35" r="3" fill="#666" />
    <circle cx="46" cy="35" r="3" fill="#666" />
  </svg>
);

const App = () => {
  return (
    <Page>
      <GlobalStyle />
      <StatusBar>
        <StatusGroup $gap={15}>
          <Clock>16:27</Clock>
          <AppIcon $bg="#0b0b14">
            <NoteIcon />
          </AppIcon>
          <AppIcon $bg="#f4530e">
            <AppIconText>证券</AppIconText>
          </AppIcon>
          <AppIcon $bg="#f3f8fe" $border>
            <RingAppIcon />
          </AppIcon>
          <AppIcon $bg="#e0047f">
            <AppIconText>唯品会</AppIconText>
          </AppIcon>
          <AppIcon $bg="#fff" $border>
            <BaiduIcon />
          </AppIcon>
        </StatusGroup>
        <StatusGroup $gap={14}>
          <AlarmIcon />
          <SpeedText>
            33.1
            <br />
            KB/s
          </SpeedText>
          <SignalBox>
            <SignalIcon />
            <FiveG>5G</FiveG>
          </SignalBox>
          <WifiIcon />
          <BatteryIcon />
        </StatusGroup>
      </StatusBar>

      <Header>
        <HeaderLeft>
          <ChevronLeft size={84} color="#333" strokeWidth={2} />
          <LogoTile>
            <LogoMark />
            证券
          </LogoTile>
        </HeaderLeft>
        <HeaderCenter>
          <Title>香港证券ETF</Title>
          <CodeRow>
            <Code>513090</Code>
            <Badge>融</Badge>
            <Badge>T+0</Badge>
            <Badge>L1</Badge>
            <TinyDown $size={12} $color="#bbb" />
          </CodeRow>
        </HeaderCenter>
        <HeaderRight>
          <RobotAvatar />
          <ShareIcon />
          <SearchIcon />
        </HeaderRight>
      </Header>

      <Stats>
        <PriceBlock>
          <BigPrice>2.285</BigPrice>
          <Changes>
            <span>-2.68%</span>
            <span>-0.063</span>
          </Changes>
        </PriceBlock>
        <StatCell>
          <StatLabel>今开</StatLabel>
          <StatValue $color={GREEN}>2.325</StatValue>
        </StatCell>
        <StatCell>
          <StatLabel>最高</StatLabel>
          <StatValue $color={RED}>2.354</StatValue>
        </StatCell>
        <StatCell>
          <StatLabel>最低</StatLabel>
          <StatValue $color={GREEN}>2.271</StatValue>
        </StatCell>
        <StatCellStart>
          <StatLabel>总手</StatLabel>
          <StatValue>8925万</StatValue>
        </StatCellStart>
        <StatCell>
          <StatLabel>金额</StatLabel>
          <StatValue $size={46}>207.1亿</StatValue>
        </StatCell>
        <StatCell>
          <StatLabel>量比</StatLabel>
          <StatValue>0.95</StatValue>
        </StatCell>
        <SubCell>
          <SubLabel>实时估值</SubLabel>
          <SubValue $size={41} $ml={12}>
            2.3029
          </SubValue>
        </SubCell>
        <SubCell>
          <SubLabel>折价率</SubLabel>
          <DotsIcon />
          <SubValue $size={45} $ml={11} $color={RED}>
            0.78%
          </SubValue>
        </SubCell>
        <SubCell>
          <SubLabel>最新份额</SubLabel>
          <SubValue $size={37} $ml={14}>
            98.69亿
          </SubValue>
        </SubCell>
        <MoreBtn>更多</MoreBtn>
      </Stats>

      <TrackRow>
        <Muted>跟踪指数</Muted>
        <Dark>香港证券</Dark>
        <GreenNum>1580.36</GreenNum>
        <GreenNum>-1.61%</GreenNum>
        <Muted>跟踪误差</Muted>
        <QuestionDot size={38} />
        <Dark>2.72%</Dark>
        <ChevronRight size={36} color="#666" strokeWidth={2.4} />
      </TrackRow>

      <TabsBar>
        <Tab $active>分时</Tab>
        <Tab>五日</Tab>
        <Tab>日K</Tab>
        <Tab>周K</Tab>
        <Tab>月K</Tab>
        <Tab>
          更多
          <TinyDown $size={8} $color="#666" />
        </Tab>
        <Tab>
          <Settings size={68} color="#666" strokeWidth={1.5} />
        </Tab>
      </TabsBar>

      <InfoBar>
        <InfoPart $color="#f2b632">均价：2.320</InfoPart>
        <InfoPart $color={GREEN} $ml={9}>
          最新：2.285
        </InfoPart>
        <InfoPart $color={GREEN} $ml={24} $wide>
          -0.063
        </InfoPart>
        <InfoPart $color={GREEN} $ml={26} $wide>
          -2.68%
        </InfoPart>
        <Spacer />
        <QuestionDot size={40} />
        <ModeBtn>大单模式</ModeBtn>
      </InfoBar>

      <Board>
        <ChartColumn>
          <PlotWrap $h={786}>
            <MainPlot />
            <PlotLabel $color={RED} $size={48} $left={15} $top={8}>
              2.430
            </PlotLabel>
            <PlotLabel $color={RED} $size={48} $right={3} $top={8}>
              3.49%
            </PlotLabel>
            <PlotLabel $color="#999" $size={48} $left={15} $top={369}>
              2.348
            </PlotLabel>
            <PlotLabel $color={GREEN} $size={48} $left={15} $top={730}>
              2.266
            </PlotLabel>
            <PlotLabel $color={GREEN} $size={48} $right={3} $top={730}>
              -3.49%
            </PlotLabel>
          </PlotWrap>
          <SubHead>
            <Select>
              成交额
              <TinyDown $size={8} $color="#666" />
            </Select>
            <SubHeadValue>207.1亿</SubHeadValue>
          </SubHead>
          <PlotWrap $h={257}>
            <VolumePlot />
            <PlotLabel $color="#999" $size={35} $left={217} $top={9}>
              2.33亿
            </PlotLabel>
            <Expand>
              <ExpandIcon />
            </Expand>
          </PlotWrap>
          <SubHead>
            <Select>
              MACD
              <TinyDown $size={8} $color="#666" />
            </Select>
            <LegendRow>
              <Legend $color="#2a2a2a" $w={158} $sx={0.7}>
                DIF:-0.005↓
              </Legend>
              <Legend $color="#eab91e" $w={162} $sx={0.7}>
                DEA:-0.004↓
              </Legend>
              <Legend $color="#cc22cc" $w={150} $sx={0.8}>
                M:-0.002↑
              </Legend>
            </LegendRow>
          </SubHead>
          <PlotWrap $h={257}>
            <MacdPlot />
            <PlotLabel $color="#999" $size={37} $left={217} $top={6}>
              0.007
            </PlotLabel>
            <PlotLabel $color="#999" $size={37} $left={217} $top={213}>
              -0.011
            </PlotLabel>
          </PlotWrap>
          <TimeAxis>
            <span>09:15</span>
            <span>09:30</span>
            <span>15:00</span>
          </TimeAxis>
        </ChartColumn>

        <Side>
          <SideTabs>
            <SideTab $active>五档</SideTab>
            <SideTab>大单</SideTab>
            <SideTab>分价</SideTab>
          </SideTabs>
          {SELLS.map(([l, p, v]) => (
            <BookRow key={l}>
              <BookLabel>{l}</BookLabel>
              <BookPrice>{p}</BookPrice>
              <BookVol>{v}</BookVol>
            </BookRow>
          ))}
          <Ratio>
            <RatioBar />
          </Ratio>
          <BuySide>
            {BUYS.map(([l, p, v]) => (
              <BookRow key={l}>
                <BookLabel>{l}</BookLabel>
                <BookPrice>{p}</BookPrice>
                <BookVol>{v}</BookVol>
              </BookRow>
            ))}
          </BuySide>
          <TradeHead>
            分时成交
            <TinyUp />
          </TradeHead>
          {TRADES.map((r, i) => (
            <TradeRow key={i}>
              <TradeTime>{r.t}</TradeTime>
              <BookPrice>{r.p}</BookPrice>
              <TradeVol $color={r.c}>
                {r.a ? <Flash $color={r.ac ?? r.c}>{r.a}</Flash> : <span />}
                <span>{r.v}</span>
              </TradeVol>
            </TradeRow>
          ))}
        </Side>
      </Board>

      <BannerWrap>
        <Banner>
          <HornIcon />
          <BannerText>黄金储备连续8个月增持&gt;&gt;</BannerText>
          <BannerSep />
          <X size={72} color={ORANGE} strokeWidth={1.2} />
        </Banner>
      </BannerWrap>
      <Gap />

      <BottomNav>
        <IndexCell>
          <IndexArrow />
          <IndexValue>3615.72</IndexValue>
          <IndexRow>
            <span>上证</span>
            <IndexPct>0.17%</IndexPct>
          </IndexRow>
        </IndexCell>
        <NavItem>
          <TradeNavIcon />
          交易
        </NavItem>
        <NavItem>
          <PlanNavIcon />
          定投
        </NavItem>
        <NavItem>
          <PostNavIcon />
          发帖
        </NavItem>
        <NavItem>
          <ToolsNavIcon />
          功能
        </NavItem>
        <NavItem>
          <MoreNavIcon />
          设自选
        </NavItem>
        <HomeBar />
      </BottomNav>
    </Page>
  );
};

export default App;
